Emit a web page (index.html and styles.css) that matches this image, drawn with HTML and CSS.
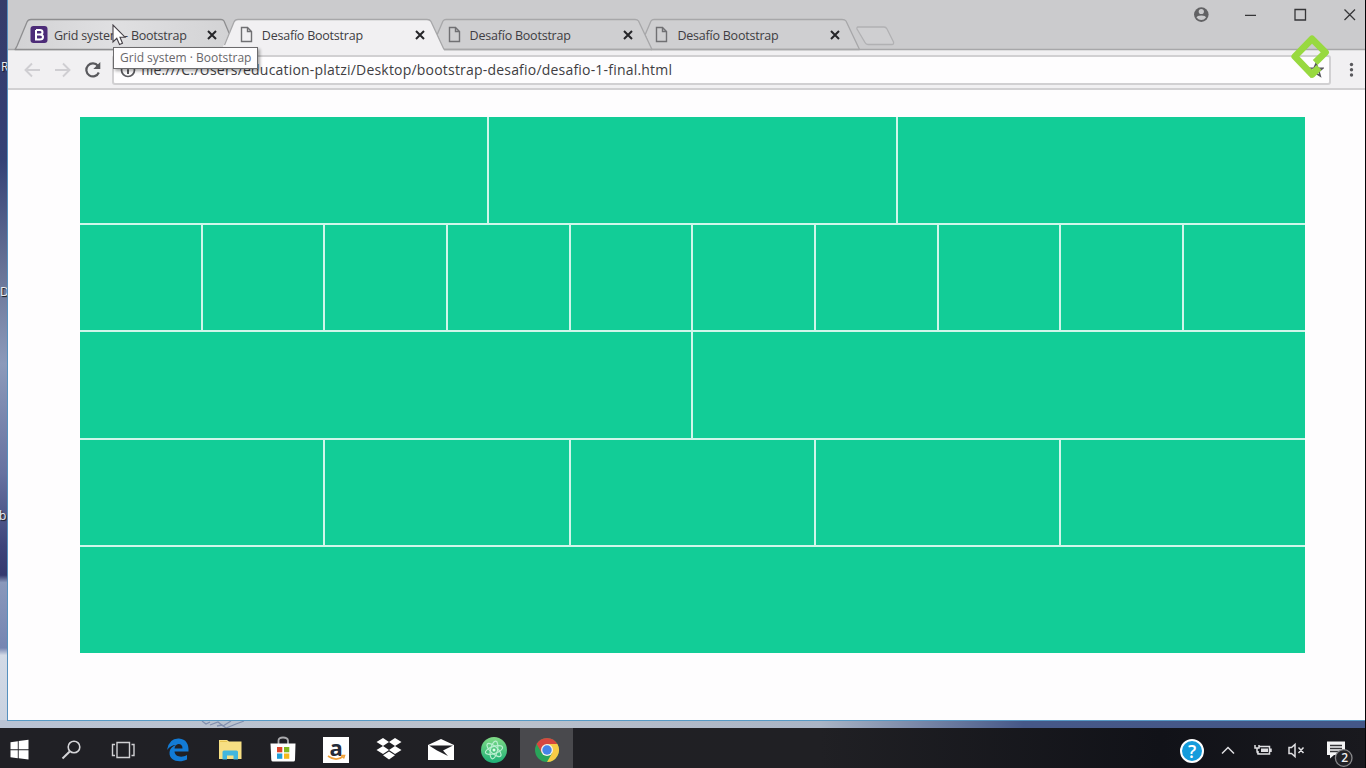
FILE: index.html
```html
<!DOCTYPE html>
<html lang="es">
<head>
<meta charset="utf-8">
<title>Desafío Bootstrap</title>
<link rel="stylesheet" href="styles.css">
</head>
<body>
<div class="desktop">
  <span class="label label-r">R</span><span class="label label-d">D</span><span class="label label-b">b</span>
  <svg class="branches" width="60" height="9" viewBox="0 0 60 9"><path d="M2 1l4 3 4-2M10 5l8-3 5 4 8-5M17 6l5-1 4 3 10-4 8-3" fill="none" stroke="#8290af" stroke-width="1.3"/></svg>
  <main class="window">
    <header class="tabstrip">
      <svg class="tab-shapes" width="1357" height="51" viewBox="8 0 1357 51">
        <defs><linearGradient id="hover" x1="0" x2="1"><stop offset="0" stop-color="#d2d2d4"/><stop offset=".45" stop-color="#e0e0e2"/><stop offset="1" stop-color="#d2d2d4"/></linearGradient></defs>
        <g fill="#cfcfd1" stroke="#a7a7a9" stroke-width="1.3" stroke-linejoin="round">
          <path d="M645 35L651 21Q652 19.5 654 19.5H842Q845 19.5 846 21L859.5 49.5H651Z"/>
          <path d="M437 35L443 21Q444 19.5 446 19.5H635Q637.500 19.5 638.500 21L652 49.500H443Z"/>
          <path d="M8 49.500H1365" fill="none"/>
          <path d="M15 49.500Q16 48 17 46L27 22Q28 19.500 31 19.500H221Q223 19.500 224 21L236 49.500Z" fill="url(#hover)" stroke="#8e8e90"/>
          <path d="M857.500 27H884Q886 27 887 29L893.500 42Q894 44.500 892 44.500H868Q866 44.500 865 42.500L857 29Q856.500 27 858.500 27Z" stroke="#b1b1b3"/>
          <path d="M221 51L234 22Q235 19.500 238 19.500H427Q430 19.500 431 21.500L444 49.500V51Z" fill="#f1f0f2" stroke="none"/>
          <path d="M224.500 45L234 22Q235 19.500 238 19.500H427Q430 19.500 431 21.500L444 49.500" fill="none"/>
        </g>
      </svg>
      <nav class="tabs">
        <div class="tab"><svg class="fav" width="18" height="18" viewBox="0 0 18 18"><rect x="0.500" y="0" width="17" height="17" rx="3" fill="#4c2b78"/><path d="M6 4H9.800Q12.500 4 12.500 6.200T9.800 8.500H6M9.800 8.500Q13 8.500 13 11T9.800 13.500H6V4" fill="none" stroke="#fff" stroke-width="2"/></svg><span class="name name-grid">Grid system - Bootstrap</span><svg class="close" viewBox="0 0 10 10"><path d="M1 1l8 8M9 1l-8 8"/></svg></div>
        <div class="tab"><svg class="fav" viewBox="0 0 18 18"><path d="M3.500 1.500H9.500L13.500 5.500V15.500H3.500ZM9.500 1.500V5.500H13.500"/></svg><span class="name">Desafío Bootstrap</span><svg class="close" viewBox="0 0 10 10"><path d="M1 1l8 8M9 1l-8 8"/></svg></div>
        <div class="tab"><svg class="fav" viewBox="0 0 18 18"><path d="M3.500 1.500H9.500L13.500 5.500V15.500H3.500ZM9.500 1.500V5.500H13.500"/></svg><span class="name">Desafío Bootstrap</span><svg class="close" viewBox="0 0 10 10"><path d="M1 1l8 8M9 1l-8 8"/></svg></div>
        <div class="tab"><svg class="fav" viewBox="0 0 18 18"><path d="M3.500 1.500H9.500L13.500 5.500V15.500H3.500ZM9.500 1.500V5.500H13.500"/></svg><span class="name">Desafío Bootstrap</span><svg class="close" viewBox="0 0 10 10"><path d="M1 1l8 8M9 1l-8 8"/></svg></div>
      </nav>
      <svg class="controls" width="173" height="30" viewBox="1192 0 173 30"><circle cx="1201.300" cy="14.600" r="7.300" fill="#626264"/><circle cx="1201.300" cy="11.500" r="2.600" fill="#cbcbcd"/><path d="M1196.500 17.500Q1197 15.500 1201.300 15.500T1206 17.500Q1204 20 1201.300 20T1196.500 17.500Z" fill="#cbcbcd"/><path d="M1245 15.300H1256M1295 9.500H1305.500V20H1295ZM1344.500 9.500L1355 20M1355 9.500L1344.500 20" fill="none" stroke="#363638" stroke-width="1.300"/></svg>
    </header>
    <section class="toolbar">
      <svg class="nav-icons" width="105" height="38" viewBox="8 51 105 38"><g fill="none" stroke-width="1.900"><path d="M40 70H26M32 63.500L25.500 70L32 76.500M55 70H69M63 63.500L69.500 70L63 76.500" stroke="#cfced2"/><path d="M98 66A6.500 6.500 0 1 0 98.800 72.500" stroke="#59595d" stroke-width="2.200"/></g><path d="M100.300 62V69H93.300Z" fill="#59595d"/></svg>
      <div class="address"><svg class="info" width="16" height="16" viewBox="0 0 16 16"><circle cx="8" cy="8" r="6.500" fill="none" stroke="#59595d" stroke-width="1.700"/><path d="M8 7.200V12M8 4V5.700" stroke="#59595d" stroke-width="2"/></svg><span class="url">file:///C:/Users/education-platzi/Desktop/bootstrap-desafio/desafio-1-final.html</span><svg class="star" width="16" height="16" viewBox="0 0 16 16"><path d="M8 1.500L10 6L14.800 6.300L11 9.400L12.300 14L8 11.400L3.700 14L5 9.400L1.200 6.300L6 6Z" fill="none" stroke="#55555a" stroke-width="1.500"/></svg></div>
      <svg class="menu" width="34" height="30" viewBox="0 0 34 30"><g fill="#59595d"><circle cx="20.500" cy="9.500" r="1.700"/><circle cx="20.500" cy="14.800" r="1.700"/><circle cx="20.500" cy="20" r="1.700"/></g></svg>
    </section>
    <section class="page">
      <div class="grid">
        <div class="row"><i></i><i></i><i></i></div>
        <div class="row"><i></i><i></i><i></i><i></i><i></i><i></i><i></i><i></i><i></i><i></i></div>
        <div class="row"><i></i><i></i></div>
        <div class="row"><i></i><i></i><i></i><i></i><i></i></div>
        <div class="row"><i></i></div>
      </div>
    </section>
  </main>
</div>
<div class="tooltip"><span>Grid system · Bootstrap</span></div>
<svg class="pointer" width="15" height="23" viewBox="0 0 15 23"><path d="M1 1V18L4.800 14.300L7.500 20.500L10.500 19.200L8 13.200H13Z" fill="#fff" stroke="#454047" stroke-width="1.100"/></svg>
<svg class="watermark" width="42" height="46" viewBox="0 0 42 46"><path d="M25.200 28.500L35.500 18.300L22 4.800L4.800 22.500L22 40.500L29 33.500" fill="none" stroke="#98d940" stroke-width="6.800" stroke-linejoin="round"/></svg>
<footer class="taskbar">
  <div class="apps">
    <div class="app"><svg viewBox="0 0 30 30"><path d="M5.500 7.300L12.800 6.200V14.200H5.500ZM13.700 6L23.500 4.700V14.200H13.700ZM5.500 15.200H12.800V23.200L5.500 22.200ZM13.700 15.200H23.500V24.500L13.700 23.300Z" fill="#fff"/></svg></div>
    <div class="app"><svg viewBox="0 0 30 30"><circle cx="16" cy="12" r="5.800" fill="none" stroke="#d5d5d8" stroke-width="1.600"/><path d="M11.700 16.500L4.500 23.500" stroke="#d5d5d8" stroke-width="2"/></svg></div>
    <div class="app"><svg viewBox="0 0 30 30"><path d="M7 7.500H19.500V22.500H7ZM5 9.500H2.500V20.500H5M21.500 9.500H24V20.500H21.500" fill="none" stroke="#d0d0d3" stroke-width="1.400"/></svg></div>
    <div class="app"><svg viewBox="0 0 30 30"><path d="M4 15Q6 3 16 3.500C23 4 26 9 25.500 16.500H11.500C12 22 19 23 24 20V24.500C16 28.500 6 25.500 6.500 17.500C7 13 10 11 13 10Q8 10 4 15ZM11.500 13.500H19.500Q19.500 9 15.500 9Q12 9.500 11.500 13.500Z" fill="#127bd6" fill-rule="evenodd"/></svg></div>
    <div class="app"><svg viewBox="0 0 30 30"><path d="M3 5H11L13 6.500H25.500V24H3Z" fill="#f7df83"/><path d="M6.500 24.500V17Q6.500 15.500 8 15.500H20.500Q22 15.500 22 17V24.500H17.500V20.500H11V24.500Z" fill="#42b6dd"/><path d="M4 6.500H11" stroke="#e9c650"/></svg></div>
    <div class="app"><svg viewBox="0 0 30 30"><path d="M10.500 9V5.500Q10.500 2.500 15 2.500T20 5.500V9" fill="none" stroke="#aaaaad" stroke-width="1.800"/><path d="M2.500 8.500H27.500L27 25Q26.800 26.500 25.500 26.500H5Q3.500 26.500 3.300 25Z" fill="#fff"/><path d="M9 12H14.300V17.300H9Z" fill="#df442a"/><path d="M16 12H21.300V17.300H16Z" fill="#82b91f"/><path d="M9 18.500H14.300V23.800H9Z" fill="#219fd8"/><path d="M16 18.500H21.300V23.800H16Z" fill="#f5b91d"/></svg></div>
    <div class="app"><div class="amazon"><span>a</span><svg viewBox="0 0 26 26"><path d="M5 19Q13 25 20 19.500M18 18.500L21.500 18.500L20.500 21.500" fill="none" stroke="#efa13a" stroke-width="1.600"/></svg></div></div>
    <div class="app"><svg viewBox="0 0 30 30"><path d="M2.500 7L9 3L15 7L9 11ZM15 7L21 3L27.500 7L21 11ZM2.500 15L9 11L15 15L9 19ZM15 15L21 11L27.500 15L21 19ZM9 20.300L15 16.500L21 20.300L15 24.500Z" fill="#fff"/></svg></div>
    <div class="app"><svg viewBox="0 0 30 30"><path d="M2 10L15 4L28 10V25H2Z" fill="#fff"/><path d="M3 10.500H27L17 15.500L22 21L11 15.500Z" fill="#202025"/></svg></div>
    <div class="app"><svg viewBox="0 0 30 30"><defs><linearGradient id="atom" x2="0" y2="1"><stop stop-color="#80da86"/><stop offset="1" stop-color="#1db076"/></linearGradient></defs><circle cx="15" cy="15" r="13" fill="url(#atom)"/><g fill="none" stroke="#b9efd0" stroke-width="1.200"><ellipse cx="15" cy="15" rx="3.500" ry="9" transform="rotate(12 15 15)"/><ellipse cx="15" cy="15" rx="3.500" ry="9" transform="rotate(72 15 15)"/><ellipse cx="15" cy="15" rx="3.500" ry="9" transform="rotate(132 15 15)"/></g><circle cx="15" cy="15" r="1.500" fill="#dfffe9"/></svg></div>
    <div class="app active"><svg viewBox="0 0 30 30"><circle cx="15" cy="15" r="12" fill="#29a45a"/><path d="M4.600 9A12 12 0 0 1 25.400 9H15L9.800 18Z" fill="#d6473f"/><path d="M25.400 9A12 12 0 0 1 15 27L20.200 18L15 9Z" fill="#f8cc46"/><circle cx="15" cy="15" r="6" fill="#f5f2e9"/><circle cx="15" cy="15" r="4.700" fill="#4584e7"/></svg></div>
  </div>
  <div class="tray">
    <span class="help">?</span>
    <svg width="151" height="40" viewBox="1215 728 151 40"><g fill="none" stroke="#dfdfe2" stroke-width="1.500"><path d="M1223 753.500L1229 747.500L1235 753.500"/><path d="M1260.500 746.500H1270.500V754H1259V751M1272 748.500V752M1256 745V748H1260V745M1258 748V751Q1258 754 1261 754"/><path d="M1290 747.500H1292.500L1296 744.500V756.500L1292.500 753.500H1290ZM1299.500 747.500L1304.500 753M1304.500 747.500L1299.500 753"/></g><path d="M1262 748.500H1269V752H1262Z" fill="#dfdfe2"/><path d="M1328 741.500H1346V755H1335L1331 758.500V755H1328Z" fill="#f5f5f6"/><path d="M1331 745.500H1343M1331 748.500H1343M1331 751.500H1341" stroke="#363639" stroke-width="1.300"/><circle cx="1344.700" cy="758" r="8.300" fill="#222226" stroke="#88888b" stroke-width="1.300"/></svg>
    <span class="count">2</span>
  </div>
</footer>
</body>
</html>
```

FILE: styles.css
```css
* { box-sizing: border-box; }
body { margin: 0; width: 1366px; height: 768px; overflow: hidden; position: relative; background: #050508; font-family: "Open Sans", "Noto Sans", sans-serif; color: #403d42; }
svg { display: block; flex: none; }
.desktop { position: relative; width: 1365px; height: 728px; padding-left: 8px; background: linear-gradient(90deg, #b9c3d4, #bcc2cc 35%, #aab5c6 60%, #465888 75%, #445788) 0 720px / 100% 8px no-repeat, linear-gradient(#353c69, #343e72 15%, #344276 22%, #6b7698 38%, #8c9aba 50%, #6772a0 65%, #3d447a 75%, #34396e 79%, #8998bb 80%, #7685b2 89%, #d3dae6 90%, #c8d1df); overflow: hidden; }
.label { position: absolute; left: 1px; color: #eee; font-size: 12px; line-height: 14px; text-shadow: 1px 1px 1px #111; }
.label-r { top: 60px; }
.label-d { top: 285px; left: 0; }
.label-b { top: 509px; left: -1px; }
.branches { position: absolute; left: 200px; top: 720px; }
.window { position: relative; width: 1357px; height: 721px; display: flex; flex-direction: column; background: #fefdfe; border-bottom: 1px solid #579ac5; box-shadow: -1px 0 #5690be; }
.tabstrip { position: relative; height: 50px; flex: none; background: #cbcbcd; display: flex; justify-content: space-between; }
.tab-shapes { position: absolute; left: 0; top: 0; }
.tabs { position: relative; display: flex; padding: 20px 0 0 22px; }
.tab { width: 207.8px; height: 30px; display: flex; align-items: center; }
.fav { width: 18px; height: 18px; margin-right: 6px; fill: none; stroke: #707073; stroke-width: 1.4; }
.tab:first-child .fav { stroke: none; }
.name { width: 151px; font-size: 12.5px; letter-spacing: -.22px; white-space: nowrap; }
.name-grid { letter-spacing: -.22px; }
.close { width: 10px; height: 10px; margin-left: 2px; stroke: #252528; stroke-width: 2; }
.controls { position: relative; }
.toolbar { height: 40px; flex: none; display: flex; padding-top: 1px; background: #f1f0f2; border-bottom: 2px solid #d1d0d2; }
.address { display: flex; align-items: center; width: 1219px; height: 30px; margin-top: 4px; margin-left: -1px; padding: 0 7px 0 8px; background: #fefdfe; border: 2px solid #d1d0d2; border-radius: 3px; }
.info { margin-right: 5px; margin-left: -2px; }
.url { flex: 1; font-size: 14px; letter-spacing: .2px; white-space: nowrap; padding-bottom: 2px; }
.star { margin-right: -2px; }
.menu { margin-top: 4px; }
.page { padding: 27px 0 0 72px; }
.grid { width: 1224.6px; height: 536px; display: grid; grid-template-rows: repeat(5, 1fr); gap: 2px; background: #d0f6ea; }
.row { display: flex; gap: 2px; }
.row i { flex: 1; background: #12cd97; }
.tooltip { position: absolute; left: 113px; top: 47px; width: 145px; height: 22px; background: #fefdfe; border: 1px solid #6c6b6d; box-shadow: 2px 2px 3px #0005; font-size: 12px; line-height: 20px; padding-left: 6px; color: #68666a; white-space: nowrap; }
.pointer { position: absolute; left: 112px; top: 24px; }
.watermark { position: absolute; left: 1290px; top: 34px; }
.taskbar { width: 1365px; height: 40px; display: flex; justify-content: space-between; background: linear-gradient(90deg, #202025, #202024 60%, #111218 85%, #19191e); }
.apps { display: flex; padding-left: 52.1px; margin-left: -58.5px; }
.app { width: 52.7px; height: 40px; display: flex; align-items: center; justify-content: center; padding-top: 4px; }
.app > svg { width: 30px; height: 30px; }
.active { background: #49494d; }
.amazon { width: 26px; height: 26px; background: #fff; position: relative; text-align: center; }
.amazon span { color: #252b39; font-size: 22px; font-weight: 700; line-height: 21px; }
.amazon svg { position: absolute; left: 0; top: 0; }
.tray { position: relative; display: flex; align-items: center; }
.help { width: 24px; height: 24px; margin: 6px 10px 0 0; border: 2px solid #fff; border-radius: 50%; background: #159cdc; color: #fff; font-size: 18px; line-height: 20px; text-align: center; font-weight: 600; }
.count { position: absolute; right: 17px; top: 22px; color: #f1f1f2; font-size: 12px; font-weight: 600; line-height: 16px; }
```
